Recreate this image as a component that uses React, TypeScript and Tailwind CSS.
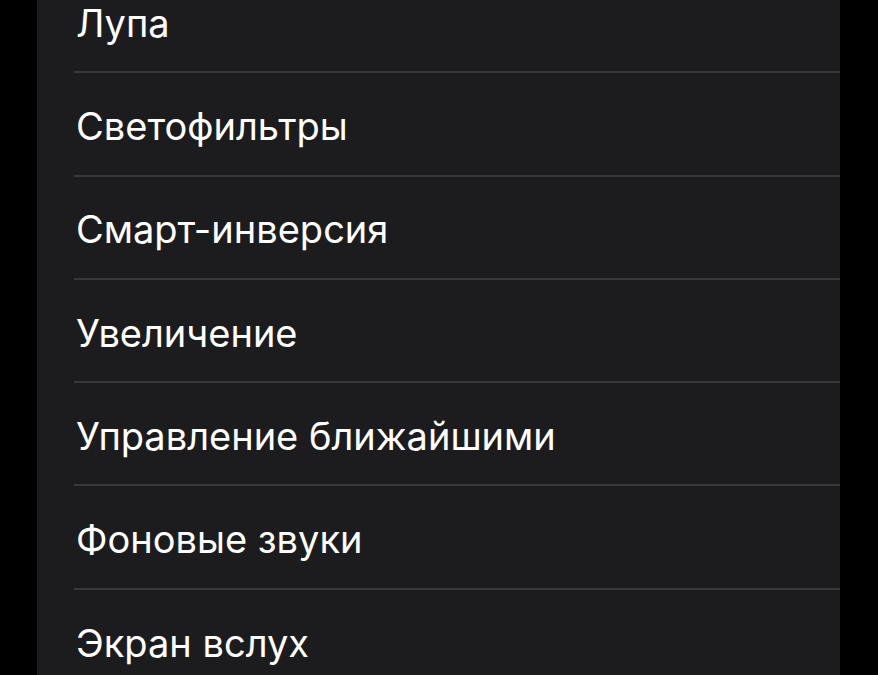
import React from 'react';

const items = [
  'Лупа',
  'Светофильтры',
  'Смарт-инверсия',
  'Увеличение',
  'Управление ближайшими',
  'Фоновые звуки',
  'Экран вслух',
];

export default function App() {
  return (
    <div className="h-[675px] w-[878px] overflow-hidden bg-black" style={{ fontFamily: 'Inter, "Noto Sans", sans-serif' }}>
      <div className="ml-[37px] mr-[38px] -mt-[30px] bg-[#1c1c1e]">
        {items.map((label, i) => (
          <div key={label} className="pl-[37px]">
            <div
              className={
                'flex h-[103.3px] items-center pl-[2px] text-[38px] text-white ' +
                (i < items.length - 1 ? 'border-b-2 border-[#38383a]' : '')
              }
            >
              <span className="pt-[5px]">{label}</span>
            </div>
          </div>
        ))}
      </div>
    </div>
  );
}
